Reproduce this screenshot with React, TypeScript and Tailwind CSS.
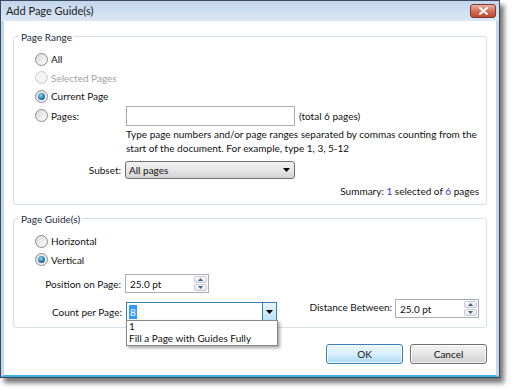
import React from 'react';

const Radio = ({ checked = false, disabled = false }: { checked?: boolean; disabled?: boolean }) => (
  <span
    className={`flex h-[13px] w-[13px] shrink-0 items-center justify-center rounded-full border ${
      disabled ? 'border-[#cbcbcb] bg-[#f3f3f3]' : 'border-[#8a8c8e] bg-gradient-to-br from-[#dcdcdc] to-[#fbfbfb]'
    }`}
  >
    {checked && <span className="h-[7px] w-[7px] rounded-full bg-[radial-gradient(circle_at_40%_35%,#86d6fb,#0f5d8c_75%)]" />}
  </span>
);

const RadioRow = ({ label, checked, disabled }: { label: string; checked?: boolean; disabled?: boolean }) => (
  <div className="flex h-[18.5px] items-center gap-[3px]">
    <Radio checked={checked} disabled={disabled} />
    <span className={disabled ? 'text-[#a3a3a3]' : ''}>{label}</span>
  </div>
);

const Arrow = ({ up }: { up?: boolean }) => (
  <svg width="5" height="3" viewBox="0 0 5 3">
    <path d={up ? 'M0 3 L2.5 0 L5 3Z' : 'M0 0 L2.5 3 L5 0Z'} fill="#4b5d7a" />
  </svg>
);

const Spinner = () => (
  <div className="flex h-full w-[13px] flex-col gap-px">
    <div className="flex flex-1 items-center justify-center rounded-[2px] border border-[#c5ccd4] bg-gradient-to-b from-[#f8f9fa] to-[#e3e7eb]">
      <Arrow up />
    </div>
    <div className="flex flex-1 items-center justify-center rounded-[2px] border border-[#c5ccd4] bg-gradient-to-b from-[#f8f9fa] to-[#e3e7eb]">
      <Arrow />
    </div>
  </div>
);

const NumberBox = ({ value }: { value: string }) => (
  <div className="flex h-[19px] w-[84px] items-center border border-[#abadb3] bg-white py-px pl-[4px] pr-px">
    <span>{value}</span>
    <div className="ml-auto h-full">
      <Spinner />
    </div>
  </div>
);

const Group = ({ title, height, children }: { title: string; height: string; children: React.ReactNode }) => (
  <div className={`rounded-[3px] border border-[#d5dfe5] ${height}`}>
    <div className="-mt-[7px] ml-[5px] w-fit bg-white px-[2px] leading-[14px] text-[#1e2a38]">{title}</div>
    {children}
  </div>
);

export default function App() {
  return (
    <div className="h-[391px] w-[515px] bg-white font-['Lato'] text-[10px] leading-[14px] text-[#111]">
      <div className="flex h-[378px] w-[500px] flex-col border border-[#3a4a5f] shadow-[4px_5px_5px_rgba(0,0,0,0.55)]">
        {/* title bar */}
        <div className="flex h-[20px] shrink-0 items-center justify-between bg-gradient-to-b from-[#c2d5eb] to-[#dbe7f4] pl-[5px] pr-[3px]">
          <span className="text-[11px] text-[#1b1b1b]">Add Page Guide(s)</span>
          <div className="flex h-[14px] w-[26px] items-center justify-center rounded-[3px] border border-[#7a3b2f] bg-gradient-to-b from-[#eab0a4] via-[#d4705b] to-[#c2452d]">
            <svg width="9" height="8" viewBox="0 0 9 8">
              <path d="M1 1 L8 7 M8 1 L1 7" stroke="#fff" strokeWidth="2" strokeLinecap="square" />
            </svg>
          </div>
        </div>

        <div className="flex flex-1 flex-col border-x-[3px] border-b-[2px] border-x-[#c4d6ea] border-b-[#3fb0e0] bg-white px-[9px]">
          {/* Page Range */}
          <div className="mt-[15px]">
            <Group title="Page Range" height="h-[169px]">
              <div className="mt-[6px] pl-[21px]">
                <RadioRow label="All" />
                <RadioRow label="Selected Pages" disabled />
                <RadioRow label="Current Page" checked />
                <div className="flex h-[20px] items-center">
                  <div className="flex w-[91px] shrink-0 items-center gap-[3px]">
                    <Radio />
                    <span>Pages:</span>
                  </div>
                  <div className="h-[20px] w-[169px] border border-[#abadb3] bg-white" />
                  <span className="ml-[4px]">(total 6 pages)</span>
                </div>
              </div>
              <div className="mt-px pl-[112px] pr-[6px]">
                Type page numbers and/or page ranges separated by commas counting from the start of the document. For example, type 1, 3, 5-12
              </div>
              <div className="mt-[6px] flex items-center">
                <span className="w-[107px] text-right">Subset:</span>
                <div className="ml-[4px] flex h-[18px] w-[170px] items-center justify-between rounded-[3px] border border-[#707070] bg-gradient-to-b from-[#f2f2f2] via-[#e6e6e6] to-[#d3d3d3] pl-[3px] pr-[4px]">
                  <span>All pages</span>
                  <svg width="7" height="4" viewBox="0 0 7 4">
                    <path d="M0 0 L3.5 4 L7 0Z" fill="#000" />
                  </svg>
                </div>
              </div>
              <div className="mt-[5px] pr-[7px] text-right">
                Summary: <span className="text-[#2a3cc8]">1</span> selected of <span className="text-[#2a3cc8]">6</span> pages
              </div>
            </Group>
          </div>

          {/* Page Guide(s) */}
          <div className="mt-[13px]">
            <Group title="Page Guide(s)" height="h-[110px]">
              <div className="mt-[6px] pl-[21px]">
                <RadioRow label="Horizontal" />
                <RadioRow label="Vertical" checked />
              </div>
              <div className="mt-[5px] flex items-center">
                <span className="w-[107px] text-right">Position on Page:</span>
                <div className="ml-[4px]">
                  <NumberBox value="25.0 pt" />
                </div>
              </div>
              <div className="mt-[6px] flex items-start pr-[7px]">
                <span className="mt-[6px] w-[108px] text-right">Count per Page:</span>
                <div className="relative ml-[4px] mt-[3px] flex h-[19px] w-[151px] items-center border border-[#3c7fb1] bg-white pl-[2px]">
                  <span className="bg-[#3399ff] px-px text-white">8</span>
                  <div className="ml-auto flex h-full w-[14px] items-center justify-center border-l border-[#3c7fb1] bg-gradient-to-b from-[#e5f4fc] to-[#bde3f8]">
                    <svg width="7" height="4" viewBox="0 0 7 4">
                      <path d="M0 0 L3.5 4 L7 0Z" fill="#000" />
                    </svg>
                  </div>
                  <div className="absolute left-[-1px] top-full z-10 w-[152px] border border-[#828790] bg-white pb-px pl-[2px] leading-[11.5px] shadow-[2px_2px_3px_rgba(0,0,0,0.35)]">
                    <div>1</div>
                    <div>Fill a Page with Guides Fully</div>
                  </div>
                </div>
                <span className="ml-auto mt-px">Distance Between:</span>
                <div className="ml-[3px]">
                  <NumberBox value="25.0 pt" />
                </div>
              </div>
            </Group>
          </div>

          {/* buttons */}
          <div className="mt-[16px] flex justify-end gap-[7px]">
            <div className="flex h-[20px] w-[77px] items-center justify-center rounded-[3px] border border-[#3c7fb1] bg-gradient-to-b from-[#eaf6fd] via-[#d9f0fc] to-[#a7d9f5] shadow-[inset_0_0_0_1px_rgba(255,255,255,0.8)]">
              OK
            </div>
            <div className="flex h-[20px] w-[77px] items-center justify-center rounded-[3px] border border-[#707070] bg-gradient-to-b from-[#f2f2f2] via-[#e6e6e6] to-[#d0d0d0] shadow-[inset_0_0_0_1px_rgba(255,255,255,0.8)]">
              Cancel
            </div>
          </div>
        </div>
      </div>
    </div>
  );
}
